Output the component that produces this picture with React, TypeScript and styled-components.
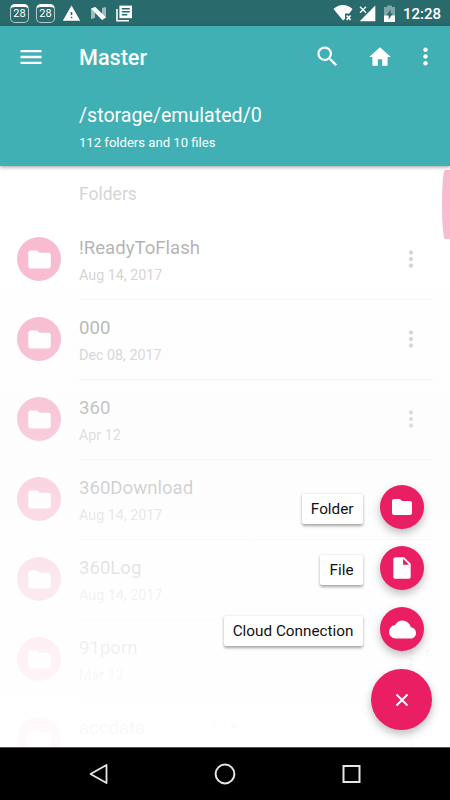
import React from "react";
import styled, { createGlobalStyle } from "styled-components";

const GlobalStyle = createGlobalStyle`
  html, body, #root { height: 100%; margin: 0; }
  body { background: #fff; font-family: Roboto, "Noto Sans", sans-serif; overflow: hidden; }
  * { box-sizing: border-box; }
  svg { display: block; flex: none; }
`;

const Screen = styled.div`
  position: relative;
  width: 450px;
  height: 800px;
  display: flex;
  flex-direction: column;
  overflow: hidden;
`;

const StatusBar = styled.div`
  height: 26px;
  flex: none;
  background: #296a6d;
  display: flex;
  align-items: center;
  justify-content: space-between;
  padding: 0 9px 0 10px;
  color: #fff;
`;

const StatusGroup = styled.div<{ $gap: number }>`
  display: flex;
  align-items: center;
  gap: ${(p) => p.$gap}px;
`;

const CalendarBadge = styled.div`
  width: 19px;
  height: 19px;
  border: 1px solid rgba(255, 255, 255, 0.65);
  border-top: 3px solid #fff;
  border-radius: 5px;
  font: 400 11px/14px Roboto, sans-serif;
  text-align: center;
`;

const Clock = styled.span`
  font-size: 15px;
  font-weight: 500;
  line-height: 24px;
  padding-top: 2px;
`;

const Header = styled.header`
  height: 140px;
  flex: none;
  background: #40b0b5;
  color: #fff;
  box-shadow: 0 1px 4px rgba(0, 0, 0, 0.4);
  z-index: 2;
`;

const Toolbar = styled.div`
  height: 61px;
  display: flex;
  align-items: center;
  padding: 0 5px 0 17px;
`;

const Title = styled.h1`
  margin: 2px 0 0 35px;
  flex: 1;
  font-size: 21.6px;
  font-weight: 500;
  line-height: 28px;
`;

const Actions = styled.div`
  display: flex;
  align-items: center;
`;

const IconButton = styled.button<{ $width: number }>`
  width: ${(p) => p.$width}px;
  height: 40px;
  padding: 0;
  border: 0;
  background: none;
  color: inherit;
  display: flex;
  align-items: center;
  justify-content: center;
`;

const Location = styled.div`
  padding: 15px 0 0 79px;
`;

const Path = styled.div`
  font-size: 19.6px;
  line-height: 27px;
`;

const Summary = styled.div`
  margin-top: 5px;
  font-size: 13.1px;
  line-height: 18px;
`;

const Content = styled.main`
  position: relative;
  flex: 1;
  min-height: 0;
  overflow: hidden;
`;

const SectionLabel = styled.div`
  height: 54px;
  padding: 1px 0 0 79px;
  font-size: 17.5px;
  line-height: 54px;
  color: #757575;
`;

const FileRow = styled.div`
  height: 80px;
  padding: 0 17px;
  display: flex;
  align-items: center;
`;

const Avatar = styled.div`
  width: 44px;
  height: 44px;
  margin-top: -2px;
  border-radius: 50%;
  background: #e91e63;
  color: #fff;
  display: flex;
  align-items: center;
  justify-content: center;
`;

const RowBody = styled.div`
  flex: 1;
  height: 80px;
  margin-left: 18px;
  border-bottom: 1px solid #dadada;
  display: flex;
  align-items: center;
  justify-content: space-between;
  padding-right: 9.5px;
  color: #757575;
`;

const RowMenu = styled.div`
  margin-top: -1px;
`;

const FileName = styled.div`
  font-size: 18.6px;
  line-height: 26px;
  margin-top: 1px;
  color: #000;
`;

const FileDate = styled.div`
  min-height: 20px;
  font-size: 14.3px;
  line-height: 20px;
  margin-top: 4px;
  color: #6c6c6c;
`;

const Veil = styled.div`
  position: absolute;
  inset: 0;
  background: linear-gradient(
    rgba(255, 255, 255, 0.69) 0,
    rgba(255, 255, 255, 0.7) 94px,
    rgba(253, 253, 253, 0.725) 174px,
    rgba(253, 253, 253, 0.77) 254px,
    rgba(253, 253, 253, 0.835) 334px,
    rgba(254, 254, 254, 0.9) 414px,
    rgba(254, 254, 254, 0.95) 494px,
    rgba(255, 255, 255, 0.98) 574px
  );
`;

const ScrollHandle = styled.div`
  position: absolute;
  top: 4px;
  right: 0;
  width: 8px;
  height: 69px;
  background: #e91e63;
  border-radius: 3px 0 0 3px / 34px 0 0 34px;
`;

const FaintDots = styled.div`
  position: absolute;
  top: 557px;
  left: 212px;
  display: flex;
  gap: 13px;
`;

const Dot = styled.i<{ $color: string }>`
  width: 6px;
  height: 6px;
  border-radius: 50%;
  background: ${(p) => p.$color};
`;

const SpeedDial = styled.div`
  position: absolute;
  right: 18px;
  bottom: 70px;
  z-index: 3;
  display: flex;
  flex-direction: column;
  align-items: flex-end;
`;

const DialList = styled.div`
  margin-bottom: 9px;
`;

const DialItem = styled.div`
  height: 61.2px;
  padding-right: 8px;
  display: flex;
  align-items: center;
  justify-content: flex-end;
  gap: 17.5px;
`;

const DialLabel = styled.span`
  height: 30px;
  margin-top: 3px;
  padding: 0 9px;
  background: #fff;
  border-radius: 2px;
  color: #111;
  font-size: 15.3px;
  line-height: 31px;
  box-shadow: 0 1.5px 3px rgba(0, 0, 0, 0.35);
`;

const Fab = styled.button<{ $size: number }>`
  width: ${(p) => p.$size}px;
  height: ${(p) => p.$size}px;
  padding: 0;
  border: 0;
  border-radius: 50%;
  background: #e91e63;
  color: #fff;
  display: flex;
  align-items: center;
  justify-content: center;
  box-shadow: 0 4px 8px rgba(0, 0, 0, 0.26);
`;

const NavBar = styled.nav`
  height: 53px;
  flex: none;
  background: #000;
  border-top: 1px solid #555;
  display: flex;
  align-items: center;
  justify-content: center;
  gap: 104px;
  z-index: 2;
`;

const icons = {
  warning: "M1 21h22L12 2 1 21zm12-3h-2v-2h2v2zm0-4h-2v-4h2v4z",
  menu: "M3 18h18v-2H3v2zm0-5h18v-2H3v2zm0-7v2h18V6H3z",
  search:
    "M15.5 14h-.79l-.28-.27A6.471 6.471 0 0 0 16 9.5 6.5 6.5 0 1 0 9.5 16c1.61 0 3.09-.59 4.23-1.57l.27.28v.79l5 4.99L20.49 19l-4.99-5zm-6 0C7.01 14 5 11.99 5 9.5S7.01 5 9.5 5 14 7.01 14 9.5 11.99 14 9.5 14z",
  home: "M10 20v-6h4v6h5v-8h3L12 3 2 12h3v8z",
  more: "M12 8c1.1 0 2-.9 2-2s-.9-2-2-2-2 .9-2 2 .9 2 2 2zm0 2c-1.1 0-2 .9-2 2s.9 2 2 2 2-.9 2-2-.9-2-2-2zm0 6c-1.1 0-2 .9-2 2s.9 2 2 2 2-.9 2-2-.9-2-2-2z",
  folder: "M10 4H4c-1.1 0-1.99.9-1.99 2L2 18c0 1.1.9 2 2 2h16c1.1 0 2-.9 2-2V8c0-1.1-.9-2-2-2h-8l-2-2z",
  file: "M6 2c-1.1 0-1.99.9-1.99 2L4 20c0 1.1.89 2 1.99 2H18c1.1 0 2-.9 2-2V8l-6-6H6zm7 7V3.5L18.5 9H13z",
  cloud: "M19.35 10.04A7.49 7.49 0 0 0 12 4C9.11 4 6.6 5.64 5.35 8.04A5.994 5.994 0 0 0 0 14c0 3.31 2.69 6 6 6h13c2.76 0 5-2.24 5-5 0-2.64-2.05-4.78-4.65-4.96z",
};

type IconName = keyof typeof icons;

const Icon = ({ name, size }: { name: IconName; size: number }) => (
  <svg width={size} height={size} viewBox="0 0 24 24" fill="currentColor">
    <path d={icons[name]} />
  </svg>
);

const AndroidN = () => (
  <svg width="17" height="15" viewBox="0 0 17 15">
    <path d="M1 3l4-2v11l-4 1zM12 2l4-1v10l-4 3z" fill="#9fbcbd" />
    <path d="M1 2.5L5.3 1 16 11.5 12 14z" fill="#fff" />
  </svg>
);

const Articles = () => (
  <svg width="17" height="17" viewBox="0 0 17 17" fill="none" stroke="#fff">
    <path d="M1 4v11.8H13" strokeWidth="1.6" />
    <path d="M3.4.6H16v12.6H3.4z" fill="#fff" stroke="none" />
    <path d="M5.8 3.8h8M5.8 6.8h8M5.8 9.8h5.5" stroke="#296a6d" strokeWidth="1.4" />
  </svg>
);

const Wifi = () => (
  <svg width="20" height="18" viewBox="0 0 20 18">
    <path d="M.5 5C6-.2 14-.2 19.5 5l-3.2 4.5H12v5.2L10 16.6z" fill="#fff" />
    <path d="M13.6 11.5l4 4.4m0-4.4l-4 4.4" stroke="#fff" strokeWidth="1.6" />
  </svg>
);

const Signal = () => (
  <svg width="17" height="17" viewBox="0 0 17 17">
    <path d="M16.3.6v15.7H.7z" fill="#fff" />
    <path d="M1 1.7l6 6m0-6l-6 6" stroke="#fff" strokeWidth="1.3" />
  </svg>
);

const Battery = () => (
  <svg width="11" height="17" viewBox="0 0 11 17">
    <path d="M3 .5h5V2h3v15H0V2h3z" fill="#7fa5a7" />
    <path d="M0 10.5h11V17H0z" fill="#fff" />
    <path d="M6.5 4.5v4h2.2l-4 6v-4.2H2.6z" fill="#296a6d" />
  </svg>
);

const files: { name: string; date?: string }[] = [
  { name: "!ReadyToFlash", date: "Aug 14, 2017" },
  { name: "000", date: "Dec 08, 2017" },
  { name: "360", date: "Apr 12" },
  { name: "360Download", date: "Aug 14, 2017" },
  { name: "360Log", date: "Aug 14, 2017" },
  { name: "91porn", date: "Mar 13" },
  { name: "accdata" },
];

const dialItems: { label: string; icon: IconName; size: number }[] = [
  { label: "Folder", icon: "folder", size: 24 },
  { label: "File", icon: "file", size: 26 },
  { label: "Cloud Connection", icon: "cloud", size: 27 },
];

export default function App() {
  return (
    <>
      <GlobalStyle />
      <Screen>
        <StatusBar>
          <StatusGroup $gap={9}>
            <StatusGroup $gap={7}>
              <CalendarBadge>28</CalendarBadge>
              <CalendarBadge>28</CalendarBadge>
              <Icon name="warning" size={19} />
            </StatusGroup>
            <AndroidN />
            <Articles />
          </StatusGroup>
          <StatusGroup $gap={8}>
            <StatusGroup $gap={6}>
              <Wifi />
              <Signal />
            </StatusGroup>
            <Battery />
            <Clock>12:28</Clock>
          </StatusGroup>
        </StatusBar>
        <Header>
          <Toolbar>
            <IconButton $width={27} aria-label="Menu">
              <Icon name="menu" size={28} />
            </IconButton>
            <Title>Master</Title>
            <Actions>
              <IconButton $width={54} aria-label="Search">
                <Icon name="search" size={27} />
              </IconButton>
              <IconButton $width={52} aria-label="Home">
                <Icon name="home" size={26} />
              </IconButton>
              <IconButton $width={39} aria-label="More options">
                <Icon name="more" size={27} />
              </IconButton>
            </Actions>
          </Toolbar>
          <Location>
            <Path>/storage/emulated/0</Path>
            <Summary>112 folders and 10 files</Summary>
          </Location>
        </Header>
        <Content>
          <SectionLabel>Folders</SectionLabel>
          {files.map((file) => (
            <FileRow key={file.name}>
              <Avatar>
                <Icon name="folder" size={27} />
              </Avatar>
              <RowBody>
                <div>
                  <FileName>{file.name}</FileName>
                  <FileDate>{file.date}</FileDate>
                </div>
                <RowMenu>
                  <Icon name="more" size={26} />
                </RowMenu>
              </RowBody>
            </FileRow>
          ))}
          <ScrollHandle />
          <Veil />
          <FaintDots>
            <Dot $color="#fdfdfd" />
            <Dot $color="#fef9fa" />
          </FaintDots>
        </Content>
        <NavBar>
          <svg width="22" height="22" viewBox="0 0 22 22" fill="none" stroke="#e6e6e6" strokeWidth="1.8" strokeLinejoin="round">
            <path d="M18.5 2v18L2.5 11z" />
          </svg>
          <svg width="22" height="22" viewBox="0 0 22 22" fill="none" stroke="#e6e6e6" strokeWidth="2">
            <circle cx="11" cy="11" r="9.4" />
          </svg>
          <svg width="22" height="22" viewBox="0 0 22 22" fill="none" stroke="#e6e6e6" strokeWidth="2">
            <rect x="3.5" y="3" width="16" height="16" />
          </svg>
        </NavBar>
        <SpeedDial>
          <DialList>
            {dialItems.map((item) => (
              <DialItem key={item.label}>
                <DialLabel>{item.label}</DialLabel>
                <Fab $size={44} aria-label={item.label}>
                  <Icon name={item.icon} size={item.size} />
                </Fab>
              </DialItem>
            ))}
          </DialList>
          <Fab $size={61} aria-label="Close menu">
            <svg width="14" height="14" viewBox="0 0 14 14" stroke="#fff" strokeWidth="2">
              <path d="M1.5 1.5l11 11m0-11l-11 11" />
            </svg>
          </Fab>
        </SpeedDial>
      </Screen>
    </>
  );
}
